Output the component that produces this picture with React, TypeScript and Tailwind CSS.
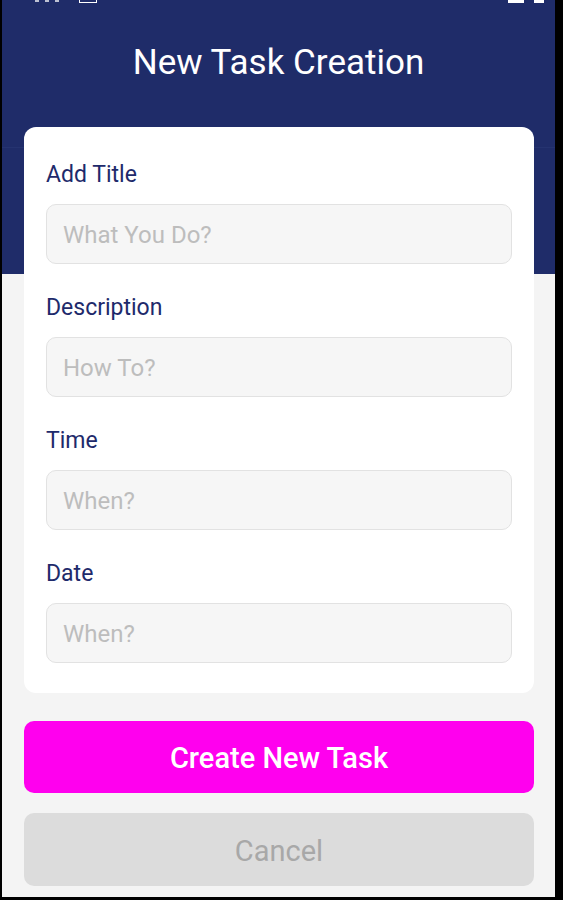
const fields = [
  { label: "Add Title", placeholder: "What You Do?" },
  { label: "Description", placeholder: "How To?" },
  { label: "Time", placeholder: "When?" },
  { label: "Date", placeholder: "When?" },
];

function Field({ label, placeholder }: { label: string; placeholder: string }) {
  return (
    <div className="flex flex-col">
      <label className="text-[23px] leading-[26px] text-[#1e2a6b]">{label}</label>
      <input
        placeholder={placeholder}
        className="mt-[16px] h-[60px] w-full rounded-[10px] border border-[#e2e2e2] bg-[#f6f6f6] px-4 pt-[2px] text-[24px] text-[#333] outline-none placeholder:text-[#bdbdbd]"
      />
    </div>
  );
}

export default function App() {
  return (
    <div className="flex h-[900px] w-[563px] bg-black font-['Roboto','Liberation_Sans',sans-serif]">
      <main className="ml-[2px] flex h-[897px] w-[553px] flex-col bg-[#f4f4f4]">
        {/* header */}
        <header className="flex h-[148px] flex-col border-b border-[#253370] bg-[#1f2c69]">
          <div className="flex h-[4px] items-start justify-between px-[33px]">
            <div className="flex items-start gap-[6px]">
              <span className="h-[2px] w-[4px] bg-white/70" />
              <span className="h-[2px] w-[4px] bg-white/70" />
              <span className="h-[2px] w-[4px] bg-white/70" />
              <span className="ml-[14px] h-[3px] w-[18px] border border-t-0 border-white" />
            </div>
            <div className="mr-[-22px] flex items-start gap-[10px]">
              <span className="h-[3px] w-[16px] bg-white" />
              <span className="h-[3px] w-[10px] bg-white" />
            </div>
          </div>
          <h1 className="pt-[38px] text-center text-[35px] leading-[42px] text-white">New Task Creation</h1>
        </header>

        {/* body */}
        <div className="flex flex-1 flex-col bg-[linear-gradient(to_bottom,#1f2c69_126px,#f4f4f4_126px)] px-[22px]">
          <section className="-mt-[21px] flex w-[510px] flex-col gap-[31px] rounded-xl bg-white px-[22px] pb-[30px] pt-[35px]">
            {fields.map((f) => (
              <Field key={f.label} label={f.label} placeholder={f.placeholder} />
            ))}
          </section>

          <button className="mt-[28px] h-[72px] w-[510px] rounded-[10px] bg-[#ff00ee] pt-[4px] text-[29px] font-medium text-white">
            Create New Task
          </button>
          <button className="mt-[20px] h-[73px] w-[510px] rounded-[10px] bg-[#dcdcdc] pt-[4px] text-[29px] text-[#a8a8a8]">
            Cancel
          </button>
        </div>
      </main>
    </div>
  );
}
